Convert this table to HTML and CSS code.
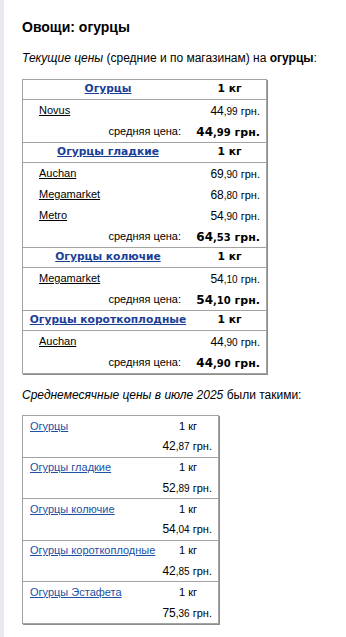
FILE: index.html
```html
<!DOCTYPE html>
<html lang="ru">
<head>
<meta charset="utf-8">
<title>Овощи: огурцы</title>
<link rel="stylesheet" href="styles.css">
</head>
<body>
<div class="page">
  <h1 class="title">Овощи: огурцы</h1>
  <p class="lead"><i>Текущие цены</i> (средние и по магазинам) на <b>огурцы</b>:</p>

  <div class="prices">
    <div class="group">
      <div class="head"><a class="hname" href="#">Огурцы</a><span class="hunit">1 кг</span></div>
      <div class="row"><a class="store" href="#">Novus</a><span class="price">44<span class="dec">,99</span><span class="tail"> грн.</span></span></div>
      <div class="row"><span class="avg-label">средняя цена:</span><span class="avg-price">44<span class="dec">,99</span><span class="tail"> грн.</span></span></div>
    </div>
    <div class="group">
      <div class="head"><a class="hname" href="#">Огурцы гладкие</a><span class="hunit">1 кг</span></div>
      <div class="row"><a class="store" href="#">Auchan</a><span class="price">69<span class="dec">,90</span><span class="tail"> грн.</span></span></div>
      <div class="row"><a class="store" href="#">Megamarket</a><span class="price">68<span class="dec">,80</span><span class="tail"> грн.</span></span></div>
      <div class="row"><a class="store" href="#">Metro</a><span class="price">54<span class="dec">,90</span><span class="tail"> грн.</span></span></div>
      <div class="row"><span class="avg-label">средняя цена:</span><span class="avg-price">64<span class="dec">,53</span><span class="tail"> грн.</span></span></div>
    </div>
    <div class="group">
      <div class="head"><a class="hname" href="#">Огурцы колючие</a><span class="hunit">1 кг</span></div>
      <div class="row"><a class="store" href="#">Megamarket</a><span class="price">54<span class="dec">,10</span><span class="tail"> грн.</span></span></div>
      <div class="row"><span class="avg-label">средняя цена:</span><span class="avg-price">54<span class="dec">,10</span><span class="tail"> грн.</span></span></div>
    </div>
    <div class="group">
      <div class="head"><a class="hname" href="#">Огурцы короткоплодные</a><span class="hunit">1 кг</span></div>
      <div class="row"><a class="store" href="#">Auchan</a><span class="price">44<span class="dec">,90</span><span class="tail"> грн.</span></span></div>
      <div class="row"><span class="avg-label">средняя цена:</span><span class="avg-price">44<span class="dec">,90</span><span class="tail"> грн.</span></span></div>
    </div>
  </div>

  <p class="lead lead2"><i>Среднемесячные цены в июле 2025</i> были такими:</p>

  <div class="monthly">
    <div class="item">
      <a class="mname" href="#">Огурцы</a><span class="munit">1 кг</span>
      <span class="mprice">42<span class="dec">,87</span><span class="tail"> грн.</span></span>
    </div>
    <div class="item">
      <a class="mname" href="#">Огурцы гладкие</a><span class="munit">1 кг</span>
      <span class="mprice">52<span class="dec">,89</span><span class="tail"> грн.</span></span>
    </div>
    <div class="item">
      <a class="mname" href="#">Огурцы колючие</a><span class="munit">1 кг</span>
      <span class="mprice">54<span class="dec">,04</span><span class="tail"> грн.</span></span>
    </div>
    <div class="item">
      <a class="mname" href="#">Огурцы короткоплодные</a><span class="munit">1 кг</span>
      <span class="mprice">42<span class="dec">,85</span><span class="tail"> грн.</span></span>
    </div>
    <div class="item">
      <a class="mname" href="#">Огурцы Эстафета</a><span class="munit">1 кг</span>
      <span class="mprice">75<span class="dec">,36</span><span class="tail"> грн.</span></span>
    </div>
  </div>
</div>
</body>
</html>
```
FILE: styles.css
```css
html, body {
  margin: 0;
  padding: 0;
  background: #ffffff;
}
body {
  font-family: "Liberation Sans", Arial, sans-serif;
  color: #000;
}
.page {
  border-left: 4px solid #e9e9ef;
  padding: 19px 0 0 18px;
  min-height: 618px;
}
.title {
  font-size: 14px;
  line-height: 17px;
  font-weight: bold;
  margin: 0;
}
.lead {
  font-size: 12px;
  line-height: 15px;
  margin: 15px 0 13px 0;
}
.lead2 {
  margin: 14px 0 12px 0;
}

/* current prices */
.prices, .monthly {
  box-sizing: border-box;
  border: 1px solid #a3a3a3;
  box-shadow: 1px 1px 0 #8c8c8c;
}
.prices {
  width: 245px;
}
.group + .group {
  border-top: 1px solid #a3a3a3;
}
.head, .row {
  display: grid;
  grid-template-columns: 1fr 73px;
  align-items: center;
  white-space: nowrap;
}
.head {
  height: 19px;
  border-bottom: 1px solid #a3a3a3;
  font-family: "DejaVu Sans", Verdana, sans-serif;
  font-weight: bold;
  font-size: 10.7px;
  line-height: 1;
}
.hname {
  justify-self: center;
  color: #1b3f96;
}
.hunit {
  justify-self: center;
}
.row {
  height: 21px;
  line-height: 1;
}
.store {
  padding-left: 16px;
  font-size: 11px;
  color: #000;
  justify-self: start;
}
.price, .mprice {
  justify-self: end;
  padding-right: 6px;
  font-size: 12px;
}
.dec {
  font-size: 10px;
}
.tail {
  font-size: 11px;
}
.avg-label {
  justify-self: end;
  padding-right: 12px;
  font-size: 11px;
}
.avg-price {
  justify-self: end;
  padding-right: 6px;
  font-family: "DejaVu Sans", Verdana, sans-serif;
  font-weight: bold;
  font-size: 12px;
}

/* monthly */
.monthly {
  width: 197px;
}
.item {
  display: grid;
  grid-template-columns: 1fr 60px;
  grid-template-rows: 20px 20.6px;
  align-items: center;
  white-space: nowrap;
  line-height: 1;
  font-size: 11px;
}
.item + .item {
  border-top: 1px solid #a3a3a3;
}
.mname {
  padding-left: 7px;
  color: #2050a5;
  justify-self: start;
}
.munit {
  justify-self: center;
}
.mprice {
  grid-column: 2;
}
```
